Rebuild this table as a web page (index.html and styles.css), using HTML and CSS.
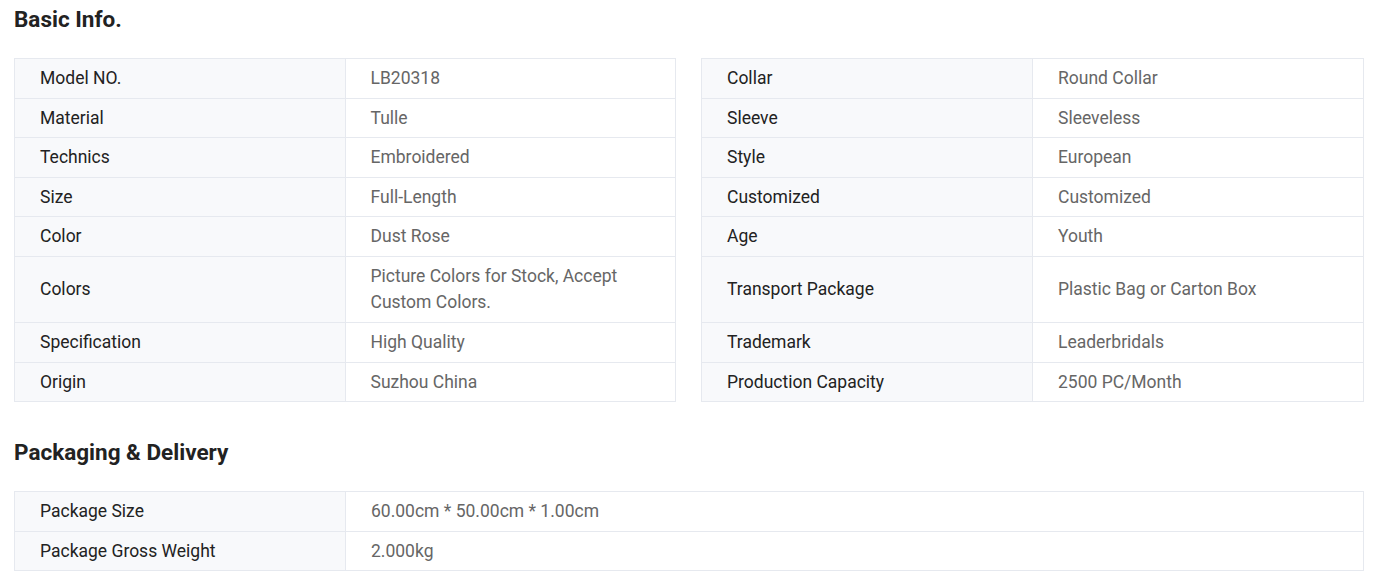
FILE: index.html
```html
<!DOCTYPE html>
<html>
<head>
<meta charset="utf-8">
<link rel="stylesheet" href="styles.css">
</head>
<body>
<section class="section">
  <h2 class="title">Basic Info.</h2>
  <div class="grid">
    <table class="info">
      <colgroup><col class="key"><col></colgroup>
      <tr><th>Model NO.</th><td>LB20318</td></tr>
      <tr><th>Material</th><td>Tulle</td></tr>
      <tr><th>Technics</th><td>Embroidered</td></tr>
      <tr><th>Size</th><td>Full-Length</td></tr>
      <tr><th>Color</th><td>Dust Rose</td></tr>
      <tr class="tall"><th>Colors</th><td>Picture Colors for Stock, Accept Custom Colors.</td></tr>
      <tr><th>Specification</th><td>High Quality</td></tr>
      <tr><th>Origin</th><td>Suzhou China</td></tr>
    </table>
    <table class="info">
      <colgroup><col class="key"><col></colgroup>
      <tr><th>Collar</th><td>Round Collar</td></tr>
      <tr><th>Sleeve</th><td>Sleeveless</td></tr>
      <tr><th>Style</th><td>European</td></tr>
      <tr><th>Customized</th><td>Customized</td></tr>
      <tr><th>Age</th><td>Youth</td></tr>
      <tr class="tall"><th>Transport Package</th><td>Plastic Bag or Carton Box</td></tr>
      <tr><th>Trademark</th><td>Leaderbridals</td></tr>
      <tr><th>Production Capacity</th><td>2500 PC/Month</td></tr>
    </table>
  </div>
</section>
<section class="section second">
  <h2 class="title">Packaging &amp; Delivery</h2>
  <table class="info">
    <colgroup><col class="key-fixed"><col></colgroup>
    <tr><th>Package Size</th><td>60.00cm * 50.00cm * 1.00cm</td></tr>
    <tr><th>Package Gross Weight</th><td>2.000kg</td></tr>
  </table>
</section>
</body>
</html>
```
FILE: styles.css
```css
html, body {
  margin: 0;
  padding: 0;
  background: #fff;
}
body {
  padding: 0 10px 0 14px;
  font-family: Roboto, "Liberation Sans", Arial, sans-serif;
  color: #222;
}
.section { width: 1350px; }
.second { margin-top: 31px; }
.title {
  margin: 0 0 20px;
  font-size: 22.5px;
  line-height: 38px;
  font-weight: 700;
  color: #222;
}
.grid {
  display: grid;
  grid-template-columns: 662px 663px;
  column-gap: 25px;
}
.info {
  width: 100%;
  border-collapse: collapse;
  table-layout: fixed;
  font-size: 17.5px;
  line-height: 26px;
}
.key { width: 50%; }
.key-fixed { width: 331px; }
.info th, .info td {
  border: 1px solid #e6e9ef;
  padding: 6.25px 25px;
  text-align: left;
  vertical-align: middle;
}
.info .tall th, .info .tall td { height: 53px; }
.info th {
  font-weight: 400;
  color: #222;
  background: #f8f9fb;
}
.info td {
  color: #666;
  background: #fff;
}
```
